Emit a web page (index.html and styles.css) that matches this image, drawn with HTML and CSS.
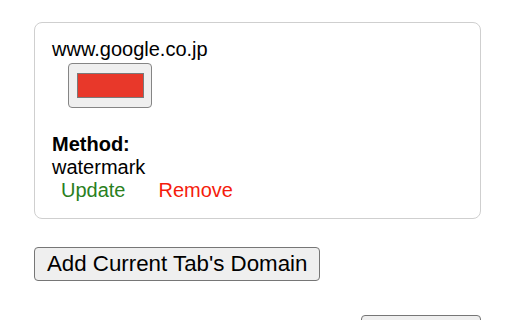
FILE: index.html
```html
<!DOCTYPE html>
<html>
<head>
<meta charset="utf-8">
<link rel="stylesheet" href="styles.css">
</head>
<body>
<div class="page">
  <div class="card">
    <div class="domain">www.google.co.jp</div>
    <div class="picker-row">
      <div class="picker"><div class="swatch"></div></div>
    </div>
    <div class="label">Method:</div>
    <div class="method">watermark</div>
    <div class="actions">
      <span class="update">Update</span>
      <span class="remove">Remove</span>
    </div>
  </div>
  <div class="add-row">
    <button class="btn add">Add Current Tab's Domain</button>
  </div>
  <div class="footer">
    <button class="btn close">Close</button>
  </div>
</div>
</body>
</html>
```
FILE: styles.css
```css
html, body {
  margin: 0;
  padding: 0;
  background: #fff;
}
body {
  font-family: "Liberation Sans", Arial, sans-serif;
  font-size: 20px;
  color: #000;
}
.page {
  padding: 22px 31px 0 34px;
}
.card {
  border: 1px solid #cfcfcf;
  border-radius: 8px;
  padding: 15px 17px 16px 17px;
}
.domain {
  line-height: 23px;
}
.picker-row {
  display: flex;
  padding: 2px 0 0 16px;
}
.picker {
  box-sizing: border-box;
  width: 84px;
  height: 45px;
  background: #efefef;
  border: 1px solid #858585;
  border-radius: 4px;
  padding: 9px 7px 9px 8px;
}
.swatch {
  box-sizing: border-box;
  width: 100%;
  height: 100%;
  background: #e8382a;
  border: 1px solid #7a7a7a;
}
.label {
  font-weight: bold;
  line-height: 23px;
  margin-top: 25px;
}
.method {
  line-height: 23px;
}
.actions {
  display: flex;
  gap: 33px;
  padding-left: 9px;
  line-height: 23px;
}
.update {
  color: #2a7f1e;
}
.remove {
  color: #f51c0c;
}
.add-row {
  margin-top: 28px;
  display: flex;
}
.btn {
  font-family: "Liberation Sans", Arial, sans-serif;
  font-size: 22.3px;
  color: #000;
  background: #efefef;
  border: 1px solid #767676;
  border-radius: 4px;
  padding: 0 12px;
  height: 34px;
  line-height: 32px;
  margin: 0;
}
.footer {
  display: flex;
  justify-content: flex-end;
  margin-top: 34px;
}
.close {
  width: 120px;
  padding-top: 12px;
  height: 46px;
}
```
